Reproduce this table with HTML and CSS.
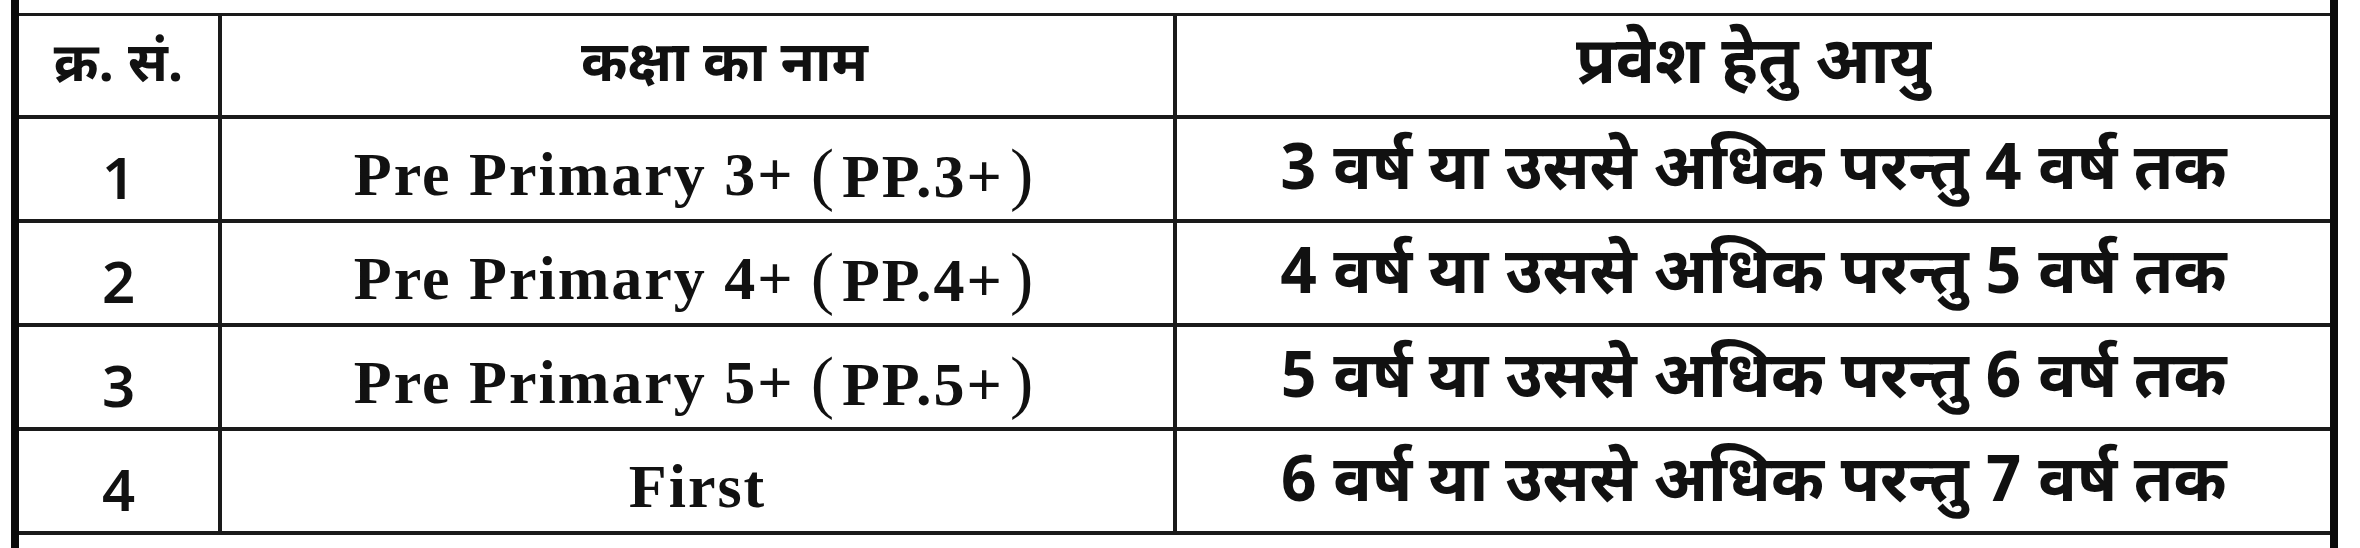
FILE: index.html
```html
<!DOCTYPE html>
<html lang="hi">
<head>
<meta charset="utf-8">
<title>प्रवेश हेतु आयु</title>
<link rel="stylesheet" href="styles.css">
</head>
<body>
<div class="frame">
  <div class="grid">
    <div class="cell c1 head hi">क्र. सं.</div>
    <div class="cell c2 head hi">कक्षा का नाम</div>
    <div class="cell c3 head hi">प्रवेश हेतु आयु</div>

    <div class="cell c1 num">1</div>
    <div class="cell c2 en">Pre Primary 3+ <span class="pp"><span class="par">(</span>PP.3+<span class="par">)</span></span></div>
    <div class="cell c3 hi">3 वर्ष या उससे अधिक परन्तु 4 वर्ष तक</div>

    <div class="cell c1 num">2</div>
    <div class="cell c2 en">Pre Primary 4+ <span class="pp"><span class="par">(</span>PP.4+<span class="par">)</span></span></div>
    <div class="cell c3 hi">4 वर्ष या उससे अधिक परन्तु 5 वर्ष तक</div>

    <div class="cell c1 num">3</div>
    <div class="cell c2 en">Pre Primary 5+ <span class="pp"><span class="par">(</span>PP.5+<span class="par">)</span></span></div>
    <div class="cell c3 hi">5 वर्ष या उससे अधिक परन्तु 6 वर्ष तक</div>

    <div class="cell c1 num">4</div>
    <div class="cell c2 en">First</div>
    <div class="cell c3 hi">6 वर्ष या उससे अधिक परन्तु 7 वर्ष तक</div>
  </div>
</div>
</body>
</html>
```

FILE: styles.css
```css
html, body {
  margin: 0;
  padding: 0;
  background: #ffffff;
}

body {
  width: 2360px;
  height: 548px;
  overflow: hidden;
  color: #111111;
}

.frame {
  box-sizing: border-box;
  margin-left: 11px;
  width: 2327px;
  height: 548px;
  border-left: 8px solid #0a0a0a;
  border-right: 8px solid #0a0a0a;
  padding-top: 13px;
}

.grid {
  display: grid;
  grid-template-columns: 203px 955px 1fr;
  grid-template-rows: 103px repeat(4, 104px);
  border-top: 3px solid #1a1a1a;
}

.cell {
  box-sizing: border-box;
  display: flex;
  align-items: center;
  justify-content: center;
  border-bottom: 4px solid #1a1a1a;
  white-space: nowrap;
}

.c1, .c2 {
  border-right: 4px solid #1a1a1a;
}

.hi {
  font-family: "Noto Sans Devanagari", "Lohit Devanagari", "Noto Sans", sans-serif;
  font-weight: 700;
  font-size: 64px;
  padding-top: 8px;
}

.head {
  font-size: 65px;
  padding-top: 4px;
}

.c2.head {
  font-size: 56px;
  padding-left: 54px;
}

.c1.head {
  font-size: 54px;
}

.num {
  font-family: "Noto Sans", "Open Sans", sans-serif;
  font-weight: 600;
  font-size: 58px;
  padding-top: 14px;
}

.en {
  font-family: "Liberation Serif", "Times New Roman", serif;
  font-weight: 700;
  font-size: 62px;
  letter-spacing: 2px;
  padding-top: 10px;
}

.pp {
  margin-left: 10px;
}

.par {
  font-weight: 400;
  font-size: 70px;
  margin: 0 6px;
}
```
